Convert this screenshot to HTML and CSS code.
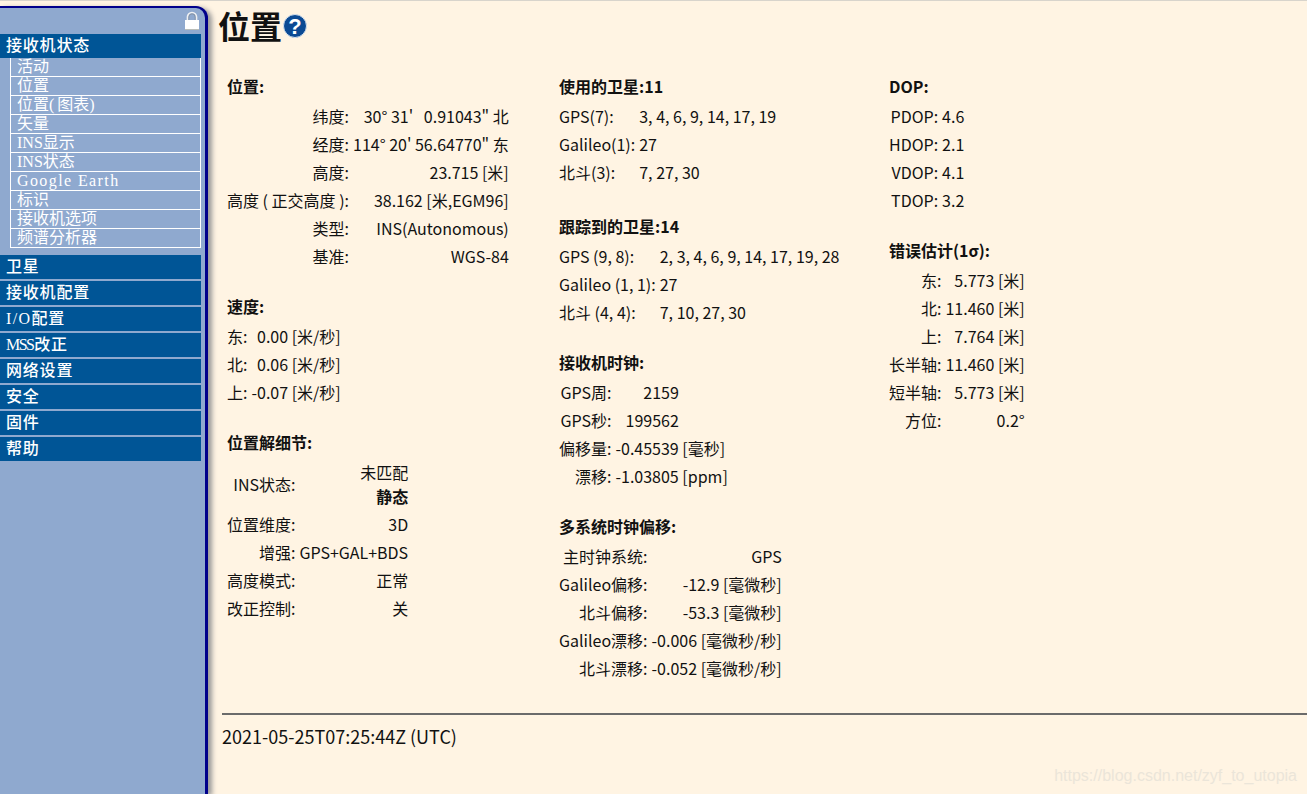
FILE: index.html
```html
<!DOCTYPE html>
<html lang="zh">
<head>
<meta charset="utf-8">
<title>位置</title>
<link rel="stylesheet" href="styles.css">
</head>
<body>
<div class="page">
  <aside class="sidebar">
    <div class="lock-row">
      <svg class="lock" viewBox="0 0 14 19" width="14" height="19"><path d="M2.500 10V6a4.500 4.500 0 0 1 9 0v4" fill="none" stroke="#eef0f3" stroke-width="1.700"/><path d="M3.800 10V6a3.200 3.200 0 0 1 6.400 0v4" fill="none" stroke="#7f8893" stroke-width="0.700"/><rect x="0" y="9" width="14" height="10" fill="#fff"/><rect x="0" y="18" width="14" height="1" fill="#b9bdb9"/></svg>
    </div>
    <nav>
      <a class="nav-head">接收机状态</a>
      <ul class="subnav">
        <li>活动</li><li>位置</li><li>位置<span class="lat paren">(</span>图表<span class="lat paren">)</span></li><li>矢量</li><li><span class="lat">INS</span>显示</li><li><span class="lat">INS</span>状态</li><li><span class="lat wide">Google Earth</span></li><li>标识</li><li>接收机选项</li><li>频谱分析器</li>
      </ul>
      <div class="nav-group">
        <a class="nav-head">卫星</a>
        <a class="nav-head">接收机配置</a>
        <a class="nav-head"><span class="lat wide">I/O</span>配置</a>
        <a class="nav-head"><span class="lat tight">MSS</span>改正</a>
        <a class="nav-head">网络设置</a>
        <a class="nav-head">安全</a>
        <a class="nav-head">固件</a>
        <a class="nav-head">帮助</a>
      </div>
    </nav>
  </aside>
  <main class="content">
    <div class="title-row">
      <h1>位置</h1>
      <svg class="help" viewBox="0 0 24 24" width="24" height="24"><circle cx="12" cy="12" r="11.500" fill="#0b4a94" stroke="#d7e2ee" stroke-width="1"/><text x="12" y="20" text-anchor="middle" class="help-mark">?</text></svg>
    </div>
    <div class="columns">
      <section class="col col-a">
        <h2>位置:</h2>
        <table class="t-right">
          <tr><td>纬度:</td><td>30° 31'&nbsp;&nbsp;&nbsp;0.91043" 北</td></tr>
          <tr><td>经度:</td><td>114° 20' 56.64770" 东</td></tr>
          <tr><td>高度:</td><td>23.715 [米]</td></tr>
          <tr><td>高度 ( 正交高度 ):</td><td>38.162 [米,EGM96]</td></tr>
          <tr><td>类型:</td><td>INS(Autonomous)</td></tr>
          <tr><td>基准:</td><td>WGS-84</td></tr>
        </table>
        <h2>速度:</h2>
        <table class="t-right">
          <tr><td>东:</td><td>0.00 [米/秒]</td></tr>
          <tr><td>北:</td><td>0.06 [米/秒]</td></tr>
          <tr><td>上:</td><td>-0.07 [米/秒]</td></tr>
        </table>
        <h2>位置解细节:</h2>
        <table class="t-right">
          <tr><td>INS状态:</td><td>未匹配<br><b>静态</b></td></tr>
          <tr><td>位置维度:</td><td>3D</td></tr>
          <tr><td>增强:</td><td>GPS+GAL+BDS</td></tr>
          <tr><td>高度模式:</td><td>正常</td></tr>
          <tr><td>改正控制:</td><td>关</td></tr>
        </table>
      </section>
      <section class="col col-b">
        <h2>使用的卫星:11</h2>
        <table class="t-left">
          <tr><td>GPS(7):</td><td>3, 4, 6, 9, 14, 17, 19</td></tr>
          <tr><td>Galileo(1):</td><td>27</td></tr>
          <tr><td>北斗(3):</td><td>7, 27, 30</td></tr>
        </table>
        <h2 class="h-wide">跟踪到的卫星:14</h2>
        <table class="t-left">
          <tr><td>GPS (9, 8):</td><td>2, 3, 4, 6, 9, 14, 17, 19, 28</td></tr>
          <tr><td>Galileo (1, 1):</td><td>27</td></tr>
          <tr><td>北斗 (4, 4):</td><td>7, 10, 27, 30</td></tr>
        </table>
        <h2>接收机时钟:</h2>
        <table class="t-clock">
          <tr><td>GPS周:</td><td class="inset">2159</td></tr>
          <tr><td>GPS秒:</td><td class="inset">199562</td></tr>
          <tr><td>偏移量:</td><td>-0.45539 [毫秒]</td></tr>
          <tr><td>漂移:</td><td>-1.03805 [ppm]</td></tr>
        </table>
        <h2>多系统时钟偏移:</h2>
        <table class="t-right">
          <tr><td>主时钟系统:</td><td>GPS</td></tr>
          <tr><td>Galileo偏移:</td><td>-12.9 [毫微秒]</td></tr>
          <tr><td>北斗偏移:</td><td>-53.3 [毫微秒]</td></tr>
          <tr><td>Galileo漂移:</td><td>-0.006 [毫微秒/秒]</td></tr>
          <tr><td>北斗漂移:</td><td>-0.052 [毫微秒/秒]</td></tr>
        </table>
      </section>
      <section class="col">
        <h2>DOP:</h2>
        <table class="t-dop">
          <tr><td>PDOP:</td><td>4.6</td></tr>
          <tr><td>HDOP:</td><td>2.1</td></tr>
          <tr><td>VDOP:</td><td>4.1</td></tr>
          <tr><td>TDOP:</td><td>3.2</td></tr>
        </table>
        <h2>错误估计(1σ):</h2>
        <table class="t-right">
          <tr><td>东:</td><td>5.773 [米]</td></tr>
          <tr><td>北:</td><td>11.460 [米]</td></tr>
          <tr><td>上:</td><td>7.764 [米]</td></tr>
          <tr><td>长半轴:</td><td>11.460 [米]</td></tr>
          <tr><td>短半轴:</td><td>5.773 [米]</td></tr>
          <tr><td>方位:</td><td>0.2°</td></tr>
        </table>
      </section>
    </div>
    <hr class="rule">
    <p class="stamp">2021-05-25T07:25:44Z (UTC)</p>
  </main>
</div>
<div class="watermark">https://blog.csdn.net/zyf_to_utopia</div>
</body>
</html>
```
FILE: styles.css
```css
* { box-sizing: border-box; }
html, body { margin: 0; height: 100%; }
body {
  background: #fff4e3;
  color: #111;
  font: 16px/24px "Noto Sans CJK SC", "Noto Sans", sans-serif;
  overflow: hidden;
}
.page {
  display: flex;
  height: 794px;
  border-top: 1px solid #d8d4cc;
}
.sidebar {
  flex: 0 0 208px;
  margin-top: 5px;
  background: #8fa9cf;
  border: solid #00008b;
  border-width: 2px 3px 0 0;
  border-top-right-radius: 12px;
  box-shadow: 4px 2px 5px #999;
  color: #fff;
}
.lock-row {
  display: flex;
  justify-content: flex-end;
  height: 26px;
  padding: 3px 6px 0 0;
}
.lock { display: block; }
nav { width: 201px; font-family: "Liberation Serif", "Noto Sans CJK SC", serif; }
.nav-head {
  display: block;
  height: 24px;
  padding-left: 6px;
  background: #005596;
  font-size: 16px;
  line-height: 24px;
  font-weight: 500;
  letter-spacing: 0.8px;
}
.lat { letter-spacing: 0; font-weight: 400; }
.lat.wide { letter-spacing: 1.4px; }
.lat.tight { letter-spacing: -1.6px; margin-right: 1px; }
.lat.paren { letter-spacing: 3px; }
.subnav {
  list-style: none;
  margin: 0 0 7px 10px;
  padding: 0;
  border-left: 1px solid #fff;
  border-right: 1px solid #fff;
}
.subnav li {
  height: 19px;
  padding-left: 6px;
  border-bottom: 1px solid #fff;
  font-size: 16px;
  line-height: 18px;
}
.nav-group { display: flex; flex-direction: column; gap: 2px; }
.content { flex: 1; min-width: 0; padding-left: 10px; }
.title-row { display: flex; align-items: center; height: 42px; margin-top: 3px; }
h1 { margin: 0 1px 0 0; font-size: 32px; line-height: 42px; font-weight: 700; }
.help { display: block; margin-top: 1px; }
.help-mark { font: 700 22px "Liberation Sans", sans-serif; fill: #fff; }
.columns { display: flex; margin-top: 28px; padding-left: 9px; }
.col-a { flex: 0 0 332px; }
.col-b { flex: 0 0 330px; }
h2 { margin: 24px 0 4px; font-size: 16px; line-height: 24px; font-weight: 700; }
h2:first-child { margin-top: 0; }
h2.h-wide { margin-top: 28px; }
table { border-collapse: collapse; }
td { padding: 2px 0; white-space: nowrap; vertical-align: middle; }
td + td { padding-left: 4px; }
.t-right td { text-align: right; }
.t-left td { text-align: left; }
.t-dop td:first-child { text-align: right; }
.t-clock td:first-child { text-align: right; }
.t-clock td.inset { padding-right: 49px; text-align: right; }
.rule { margin: 31px 0 0 4px; border: 0; border-top: 2px solid #6b6b6b; }
.stamp { margin: 9px 0 0 4px; font-size: 18px; line-height: 24px; }
.watermark {
  position: absolute;
  right: 10px;
  bottom: 7px;
  font: 16px/22px "Liberation Sans", sans-serif;
  color: #ebe5d9;
}
```
